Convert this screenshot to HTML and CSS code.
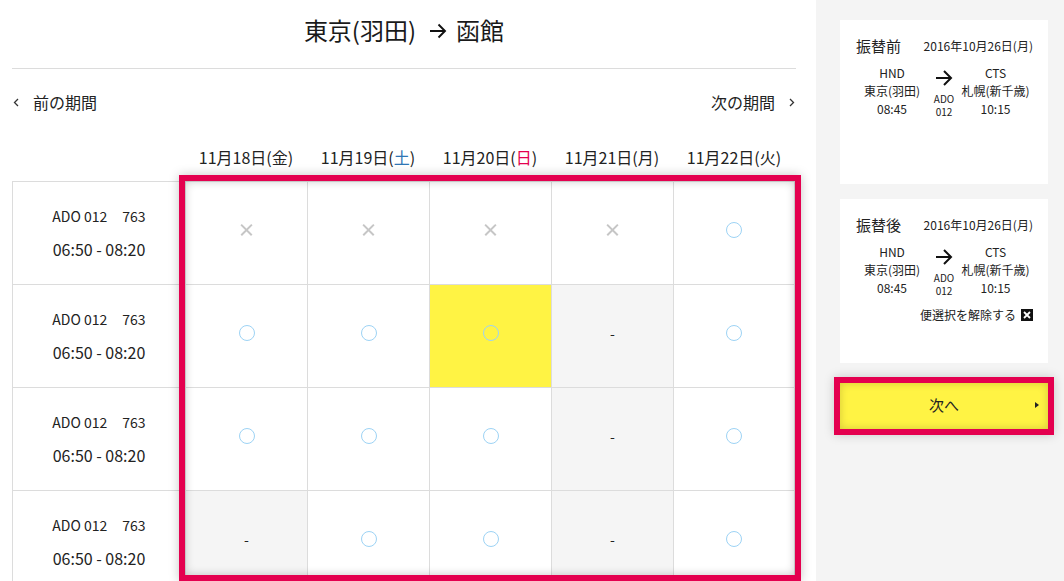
FILE: index.html
```html
<!DOCTYPE html>
<html>
	<head>
		<meta charset="UTF-8">
		<title>便の振替</title>
		<link rel="stylesheet" href="styles.css">
	</head>
	<body>
		<div class="main">
			<!--区間-->
			<h1 class="route">
				東京(羽田)
				<svg class="route-arrow" width="18" height="16" viewBox="0 0 18 16"><path d="M1 8h15M9.5 1.5L16 8l-6.5 6.5" fill="none" stroke="#111" stroke-width="1.9"/></svg>
				函館
			</h1>

			<!--期間切替-->
			<div class="pager">
				<a class="prev">
					<svg width="6" height="9" viewBox="0 0 6 9"><path d="M5 1L1.5 4.5 5 8" fill="none" stroke="#333" stroke-width="1.3"/></svg>
					<span>前の期間</span>
				</a>
				<a class="next-term">
					<span>次の期間</span>
					<svg width="6" height="9" viewBox="0 0 6 9"><path d="M1 1l3.5 3.5L1 8" fill="none" stroke="#333" stroke-width="1.3"/></svg>
				</a>
			</div>

			<!--空席表-->
			<div class="schedule">
				<div class="day"></div>
				<div class="day">11月18日(金)</div>
				<div class="day">11月19日(<em class="sat">土</em>)</div>
				<div class="day">11月20日(<em class="sun">日</em>)</div>
				<div class="day">11月21日(月)</div>
				<div class="day">11月22日(火)</div>

				<div class="cell flight"><p class="no">ADO 012<span>763</span></p><p class="time">06:50 - 08:20</p></div>
				<div class="cell"><span class="mark ng"></span></div>
				<div class="cell"><span class="mark ng"></span></div>
				<div class="cell"><span class="mark ng"></span></div>
				<div class="cell"><span class="mark ng"></span></div>
				<div class="cell"><span class="mark ok"></span></div>

				<div class="cell flight"><p class="no">ADO 012<span>763</span></p><p class="time">06:50 - 08:20</p></div>
				<div class="cell"><span class="mark ok"></span></div>
				<div class="cell"><span class="mark ok"></span></div>
				<div class="cell picked"><span class="mark ok"></span></div>
				<div class="cell off"><span class="mark none">-</span></div>
				<div class="cell"><span class="mark ok"></span></div>

				<div class="cell flight"><p class="no">ADO 012<span>763</span></p><p class="time">06:50 - 08:20</p></div>
				<div class="cell"><span class="mark ok"></span></div>
				<div class="cell"><span class="mark ok"></span></div>
				<div class="cell"><span class="mark ok"></span></div>
				<div class="cell off"><span class="mark none">-</span></div>
				<div class="cell"><span class="mark ok"></span></div>

				<div class="cell flight"><p class="no">ADO 012<span>763</span></p><p class="time">06:50 - 08:20</p></div>
				<div class="cell off"><span class="mark none">-</span></div>
				<div class="cell"><span class="mark ok"></span></div>
				<div class="cell"><span class="mark ok"></span></div>
				<div class="cell off"><span class="mark none">-</span></div>
				<div class="cell"><span class="mark ok"></span></div>

				<!--選択枠-->
				<div class="frame"></div>
			</div>
		</div>

		<div class="side">
			<div class="card">
				<div class="card-head">
					<h3>振替前</h3>
					<span class="date">2016年10月26日(月)</span>
				</div>
				<div class="legs">
					<div class="leg"><span>HND</span><span>東京(羽田)</span><span>08:45</span></div>
					<div class="via">
						<svg width="18" height="16" viewBox="0 0 18 16"><path d="M1 8h15M9 1l7 7-7 7" fill="none" stroke="#111" stroke-width="2"/></svg>
						<span>ADO</span><span>012</span>
					</div>
					<div class="leg"><span>CTS</span><span>札幌(新千歳)</span><span>10:15</span></div>
				</div>
			</div>

			<div class="card">
				<div class="card-head">
					<h3>振替後</h3>
					<span class="date">2016年10月26日(月)</span>
				</div>
				<div class="legs">
					<div class="leg"><span>HND</span><span>東京(羽田)</span><span>08:45</span></div>
					<div class="via">
						<svg width="18" height="16" viewBox="0 0 18 16"><path d="M1 8h15M9 1l7 7-7 7" fill="none" stroke="#111" stroke-width="2"/></svg>
						<span>ADO</span><span>012</span>
					</div>
					<div class="leg"><span>CTS</span><span>札幌(新千歳)</span><span>10:15</span></div>
				</div>
				<div class="release">
					<span>便選択を解除する</span>
					<svg width="12" height="12" viewBox="0 0 12 12"><rect width="12" height="12" fill="#111"/><path d="M3 3l6 6M9 3l-6 6" stroke="#fff" stroke-width="1.8"/></svg>
				</div>
			</div>

			<div class="next">次へ</div>
		</div>
	</body>
</html>
```

FILE: styles.css
```css
*{
	margin: 0;
	padding: 0;
	box-sizing: border-box;
}
html,body{
	height: 581px;
	overflow: hidden;
}
body{
	display: flex;
	font-family: "Noto Sans CJK JP", "Noto Sans", sans-serif;
	color: #222;
	background: #fff;
}
em{
	font-style: normal;
}

/*左側*/
.main{
	width: 816px;
	padding: 0 20px 0 12px;
	background: #fff;
}
.route{
	height: 69px;
	padding-bottom: 9px;
	border-bottom: 1px solid #dcdcdc;
	display: flex;
	justify-content: center;
	align-items: center;
	font-size: 24px;
	font-weight: normal;
	color: #1a1a1a;
}
.route-arrow{
	margin: 2px 9px 0 13px;
}

/*期間切替*/
.pager{
	display: flex;
	justify-content: space-between;
	margin-top: 21px;
	font-size: 16px;
	line-height: 24px;
}
.pager a{
	display: flex;
	align-items: center;
}
.prev svg{
	margin: 0 14px 0 1px;
}
.next-term svg{
	margin: 0 1px 0 14px;
}

/*空席表*/
.schedule{
	position: relative;
	display: grid;
	grid-template-columns: 173px repeat(5, 122px);
	grid-template-rows: 67px;
	grid-auto-rows: 103px;
}
.day{
	display: flex;
	justify-content: center;
	align-items: flex-end;
	padding-bottom: 12px;
	font-size: 16px;
	line-height: 24px;
}
.sat{
	color: #2f76b5;
}
.sun{
	color: #e4004f;
}
.cell{
	border-top: 1px solid #dcdcdc;
	border-left: 1px solid #dcdcdc;
	display: flex;
	justify-content: center;
	align-items: center;
}
.cell:nth-child(6n){
	border-right: 1px solid #dcdcdc;
}
.off{
	background: #f5f5f5;
}
.picked{
	background: #fff344;
}
.flight{
	flex-direction: column;
}
.flight .no{
	font-size: 14px;
	line-height: 20px;
}
.flight .no span{
	margin-left: 15px;
}
.flight .time{
	margin-top: 12px;
	font-size: 16px;
	line-height: 22px;
}

/*記号*/
.mark{
	margin-bottom: 7px;
}
.ok{
	width: 16px;
	height: 16px;
	border: 1.6px solid #9dd3f5;
	border-radius: 50%;
}
.ng{
	position: relative;
	width: 11px;
	height: 11px;
}
.ng::before,
.ng::after{
	content: "";
	position: absolute;
	left: -2px;
	top: 5px;
	width: 15px;
	height: 1.8px;
	background: #c6c6c6;
	transform: rotate(45deg);
}
.ng::after{
	transform: rotate(-45deg);
}
.none{
	font-size: 14px;
	line-height: 20px;
	margin-bottom: 6px;
}
.frame{
	position: absolute;
	left: 167px;
	top: 61px;
	width: 622px;
	height: 406px;
	border: 6px solid #e4004f;
	box-shadow: inset 0 0 10px rgba(0,0,0,.22), 0 0 10px rgba(0,0,0,.22);
	pointer-events: none;
}

/*右側*/
.side{
	width: 248px;
	background: #f4f4f4;
	padding: 20px 16px 0 24px;
}
.card{
	height: 164px;
	padding-top: 15px;
	background: #fff;
}
.card + .card{
	margin-top: 15px;
}
.card-head{
	display: flex;
	justify-content: space-between;
	align-items: center;
	height: 20px;
	padding: 0 15px 0 16px;
}
.card-head h3{
	font-size: 15px;
	font-weight: normal;
}
.date{
	font-size: 12px;
}
.legs{
	display: grid;
	grid-template-columns: 56px 48px 55px;
	padding-left: 24px;
	margin-top: 9px;
	font-size: 12px;
	line-height: 18px;
}
.leg{
	display: flex;
	flex-direction: column;
	align-items: center;
	white-space: nowrap;
}
.via{
	display: flex;
	flex-direction: column;
	align-items: center;
	font-size: 10px;
	line-height: 13px;
}
.via svg{
	margin: 6px 0 6px;
}
.release{
	display: flex;
	justify-content: flex-end;
	align-items: center;
	gap: 5px;
	margin-top: 9px;
	padding-right: 15px;
	font-size: 12px;
	line-height: 18px;
}

/*次へボタン*/
.next{
	position: relative;
	height: 46px;
	margin-top: 20px;
	padding-bottom: 3px;
	display: flex;
	justify-content: center;
	align-items: center;
	font-size: 15px;
	background: #fff344;
	box-shadow: inset 0 0 8px rgba(0,0,0,.18), 0 0 0 6px #e4004f, 0 0 10px 6px rgba(0,0,0,.18);
}
.next::after{
	content: "";
	position: absolute;
	right: 9px;
	top: 19px;
	border-left: 4px solid #222;
	border-top: 3.5px solid transparent;
	border-bottom: 3.5px solid transparent;
}
```
